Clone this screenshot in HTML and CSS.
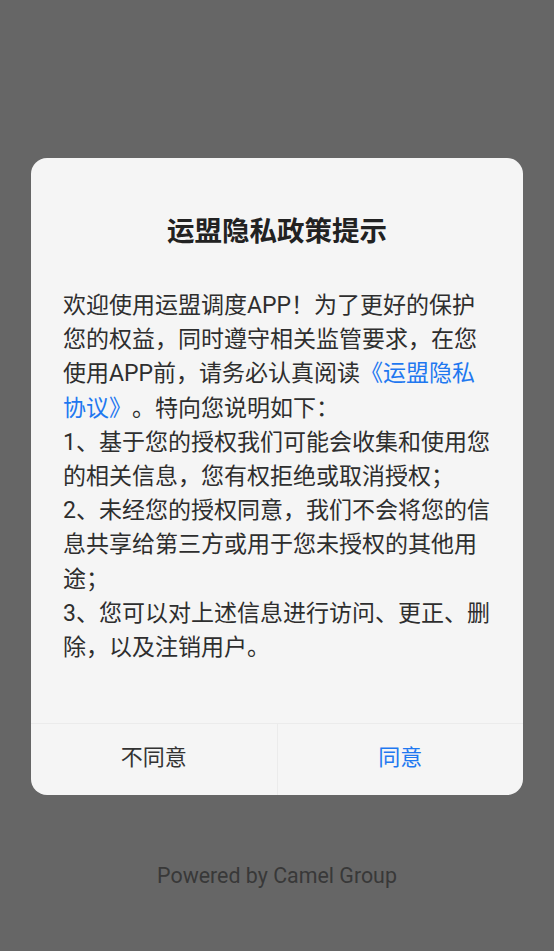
FILE: index.html
```html
<!DOCTYPE html>
<html>
  <head>
    <meta charset="utf-8">
    <meta name="viewport" content="width=device-width, initial-scale=1">
    <title>运盟调度</title>
    <link rel="stylesheet" href="styles.css">
  </head>
  <body>
    <!-- 隐私政策弹窗 -->
    <div class="privacy-dialog">
      <h2 class="dialog-title">运盟隐私政策提示</h2>
      <div class="dialog-content">
        <p>欢迎使用运盟调度APP！为了更好的保护您的权益，同时遵守相关监管要求，在您使用APP前，请务必认真阅读<a class="link">《运盟隐私协议》</a>。特向您说明如下：</p>
        <p>1、基于您的授权我们可能会收集和使用您的相关信息，您有权拒绝或取消授权；</p>
        <p>2、未经您的授权同意，我们不会将您的信息共享给第三方或用于您未授权的其他用途；</p>
        <p>3、您可以对上述信息进行访问、更正、删除，以及注销用户。</p>
      </div>
      <div class="dialog-footer">
        <div class="btn btn-cancel">不同意</div>
        <div class="btn btn-ok">同意</div>
      </div>
    </div>
    <!-- 底部版权 -->
    <p class="powered">Powered by Camel Group</p>
  </body>
</html>
```

FILE: styles.css
```css
/* -------- 页面 ------------- */
html, body {
  height: 100%;
}
body {
  margin: 0;
  background: #666666;
  font-family: Roboto, "Noto Sans CJK SC", sans-serif;
  display: flex;
  flex-direction: column;
  align-items: center;
  padding-top: 158px;
  box-sizing: border-box;
}
/* -------- 弹窗 ------------- */
.privacy-dialog {
  width: 492px;
  background: #f5f5f5;
  border-radius: 16px;
  overflow: hidden;
}
.dialog-title {
  margin: 0;
  padding-top: 54px;
  line-height: 40px;
  font-size: 27.5px;
  font-weight: bold;
  color: #222;
  text-align: center;
}
.dialog-content {
  margin-top: 37px;
  padding: 0 32px 58px;
  font-size: 23px;
  line-height: 34.2px;
  color: #2e2e2e;
  text-spacing-trim: space-all;/* 标点不压缩 */
}
.dialog-content p {
  margin: 0;
}
.link {
  color: #1f78f0;
}
/* -------- 按钮 ------------- */
.dialog-footer {
  display: flex;
  border-top: 1px solid #ebebeb;
}
.btn {
  flex: 1;
  height: 71px;
  line-height: 68px;
  text-align: center;
  font-size: 22px;
  color: #333;
}
.btn-ok {
  color: #1f78f0;
  border-left: 1px solid #ebebeb;
}
/* -------- 版权 ------------- */
.powered {
  margin: 68px 0 0;
  font-size: 21.4px;
  color: #383838;
}
```
